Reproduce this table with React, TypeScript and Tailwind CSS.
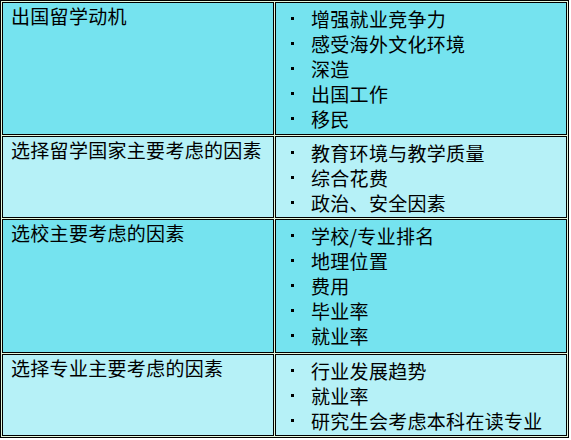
const rows = [
  {
    title: '出国留学动机',
    items: ['增强就业竞争力', '感受海外文化环境', '深造', '出国工作', '移民'],
    bg: 'bg-[#75e3ef]',
    h: 'h-[133px]',
  },
  {
    title: '选择留学国家主要考虑的因素',
    items: ['教育环境与教学质量', '综合花费', '政治、安全因素'],
    bg: 'bg-[#b6f1f7]',
    h: 'h-[82px]',
  },
  {
    title: '选校主要考虑的因素',
    items: ['学校/专业排名', '地理位置', '费用', '毕业率', '就业率'],
    bg: 'bg-[#75e3ef]',
    h: 'h-[134px]',
  },
  {
    title: '选择专业主要考虑的因素',
    items: ['行业发展趋势', '就业率', '研究生会考虑本科在读专业'],
    bg: 'bg-[#b6f1f7]',
    h: 'h-[82px]',
  },
];

export default function App() {
  return (
    <div
      className="w-[569px] border border-black bg-[#e2f7dc] p-[1px] flex flex-col gap-[1px] text-black text-[19px] tracking-[0.3px]"
      style={{ fontFamily: '"Noto Sans CJK SC", "Noto Sans", sans-serif' }}
    >
      {rows.map((row) => (
        <div key={row.title} className="flex gap-[1px]">
          <div className={`w-[272px] ${row.h} ${row.bg} border border-black pl-[8px] leading-[25px]`}>
            {row.title}
          </div>
          <ul className={`w-[292px] ${row.h} ${row.bg} border border-black pt-[3px]`}>
            {row.items.map((item) => (
              <li key={item} className="flex items-center h-[25px] leading-[25px]">
                <span className="ml-[15px] w-[3px] h-[3px] bg-black shrink-0" />
                <span className="ml-[17px]">{item}</span>
              </li>
            ))}
          </ul>
        </div>
      ))}
    </div>
  );
}
